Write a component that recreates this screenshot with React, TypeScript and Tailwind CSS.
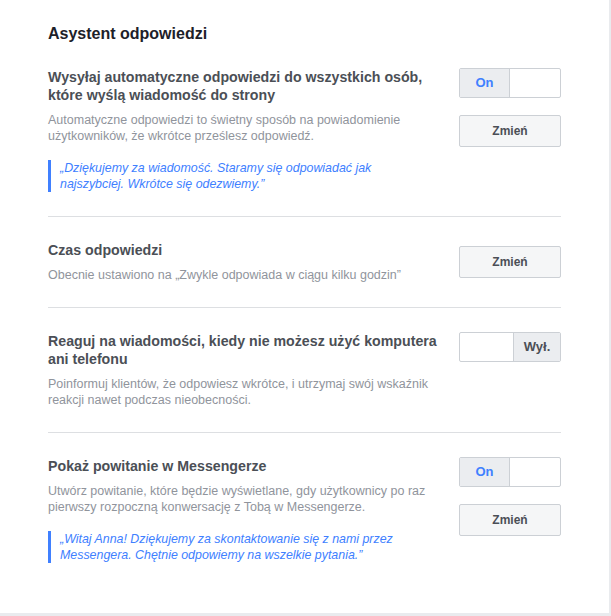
import type { ReactNode } from 'react';

const font = { fontFamily: '"Liberation Sans", Arial, sans-serif' };

function Toggle({ on }: { on: boolean }) {
  return (
    <div className="flex h-[30px] w-[102px] overflow-hidden rounded-[2px] border border-[#ccd0d5] bg-white text-[13px] font-bold">
      {on ? (
        <>
          <div className="flex w-[50px] items-center justify-center border-r border-[#ccd0d5] bg-[#ebedf0] text-[#4080ff]">On</div>
          <div className="flex-1" />
        </>
      ) : (
        <>
          <div className="flex-1" />
          <div className="flex w-[47px] items-center justify-center border-l border-[#ccd0d5] bg-[#ebedf0] text-[#4b4f56]">Wył.</div>
        </>
      )}
    </div>
  );
}

function ChangeButton() {
  return (
    <button
      type="button"
      className="flex h-[32px] w-[102px] items-center justify-center rounded-[2px] border border-[#ccd0d5] bg-[#f5f6f7] text-[12px] font-bold text-[#4b4f56]"
    >
      Zmień
    </button>
  );
}

function Quote({ children }: { children: ReactNode }) {
  return (
    <div className="mt-4 border-l-[3px] border-[#4080ff] pl-[9px] text-[12.4px] leading-4 italic text-[#4080ff]">
      {children}
    </div>
  );
}

function Section({
  title,
  desc,
  quote,
  right,
  center,
  last,
}: {
  title: ReactNode;
  desc: ReactNode;
  quote?: ReactNode;
  right: ReactNode;
  center?: boolean;
  last?: boolean;
}) {
  return (
    <div className={`flex pt-6 pb-6 ${center ? 'items-center' : 'items-start'} ${last ? '' : 'border-b border-[#dddfe2]'}`}>
      <div className="w-[400px]">
        <div className="text-[14.2px] leading-[18px] font-bold text-[#4b4f56]">{title}</div>
        <div className="mt-2 text-[12.5px] leading-4 text-[#90949c]">{desc}</div>
        {quote && <Quote>{quote}</Quote>}
      </div>
      <div className="ml-auto flex flex-col gap-[17px]">{right}</div>
    </div>
  );
}

export default function App() {
  return (
    <div className="h-[616px] w-[611px] bg-[#e9ebee]" style={font}>
      <div className="h-[613px] w-[609px] bg-white px-12 pt-6">
        <h1 className="text-[16px] leading-5 font-bold text-[#1d2129]">Asystent odpowiedzi</h1>
        <Section
          title={<>Wysyłaj automatyczne odpowiedzi do wszystkich osób,<br />które wyślą wiadomość do strony</>}
          desc={<>Automatyczne odpowiedzi to świetny sposób na powiadomienie<br />użytkowników, że wkrótce prześlesz odpowiedź.</>}
          quote={<>„Dziękujemy za wiadomość. Staramy się odpowiadać jak<br />najszybciej. Wkrótce się odezwiemy.”</>}
          right={<><Toggle on /><ChangeButton /></>}
        />
        <Section
          center
          title="Czas odpowiedzi"
          desc="Obecnie ustawiono na „Zwykle odpowiada w ciągu kilku godzin”"
          right={<ChangeButton />}
        />
        <Section
          title={<>Reaguj na wiadomości, kiedy nie możesz użyć komputera<br />ani telefonu</>}
          desc={<>Poinformuj klientów, że odpowiesz wkrótce, i utrzymaj swój wskaźnik<br />reakcji nawet podczas nieobecności.</>}
          right={<Toggle on={false} />}
        />
        <Section
          last
          title="Pokaż powitanie w Messengerze"
          desc={<>Utwórz powitanie, które będzie wyświetlane, gdy użytkownicy po raz<br />pierwszy rozpoczną konwersację z Tobą w Messengerze.</>}
          quote={<>„Witaj Anna! Dziękujemy za skontaktowanie się z nami przez<br />Messengera. Chętnie odpowiemy na wszelkie pytania.”</>}
          right={<><Toggle on /><ChangeButton /></>}
        />
      </div>
    </div>
  );
}
